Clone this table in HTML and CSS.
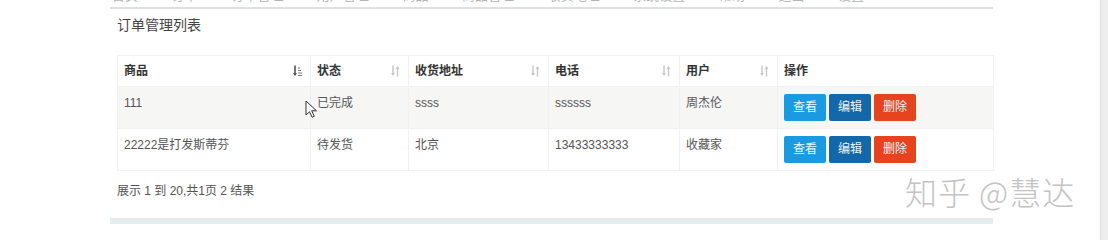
FILE: index.html
```html
<!DOCTYPE html>
<html lang="zh">
<head>
<meta charset="utf-8">
<title>订单管理列表</title>
<link rel="stylesheet" href="styles.css">
</head>
<body>
<div class="page">
  <div class="main">
    <div class="topbar">
      <div class="crumbs">首页 订单 订单管理 用户管理 商品 商品管理 收货地址 系统设置 帮助 退出 设置</div>
    </div>
    <div class="panel">
      <h2 class="title">订单管理列表</h2>
      <table class="grid">
        <colgroup>
          <col class="c1"><col class="c2"><col class="c3"><col class="c4"><col class="c5"><col class="c6">
        </colgroup>
        <thead>
          <tr>
            <th><div class="th"><span>商品</span>
              <svg class="sort" width="9" height="12" viewBox="0 0 9 12"><path d="M2 0.5v9.5" stroke="#555" stroke-width="1.6" fill="none"/><path d="M0 8l2 3 2-3z" fill="#555"/><path d="M5 3h2M5 5.5h3M5 8h4M5 10.5h4" stroke="#777" stroke-width="1.2"/></svg></div></th>
            <th><div class="th"><span>状态</span>
              <svg class="sort" width="9" height="12" viewBox="0 0 9 12"><path d="M2 0.5v9" stroke="#c8c8c8" stroke-width="1.4" fill="none"/><path d="M0 8l2 3 2-3z" fill="#c8c8c8"/><path d="M6.5 11.5v-9" stroke="#c8c8c8" stroke-width="1.4" fill="none"/><path d="M4.5 4l2-3 2 3z" fill="#c8c8c8"/></svg></div></th>
            <th><div class="th"><span>收货地址</span>
              <svg class="sort" width="9" height="12" viewBox="0 0 9 12"><path d="M2 0.5v9" stroke="#c8c8c8" stroke-width="1.4" fill="none"/><path d="M0 8l2 3 2-3z" fill="#c8c8c8"/><path d="M6.5 11.5v-9" stroke="#c8c8c8" stroke-width="1.4" fill="none"/><path d="M4.5 4l2-3 2 3z" fill="#c8c8c8"/></svg></div></th>
            <th><div class="th"><span>电话</span>
              <svg class="sort" width="9" height="12" viewBox="0 0 9 12"><path d="M2 0.5v9" stroke="#c8c8c8" stroke-width="1.4" fill="none"/><path d="M0 8l2 3 2-3z" fill="#c8c8c8"/><path d="M6.5 11.5v-9" stroke="#c8c8c8" stroke-width="1.4" fill="none"/><path d="M4.5 4l2-3 2 3z" fill="#c8c8c8"/></svg></div></th>
            <th><div class="th"><span>用户</span>
              <svg class="sort" width="9" height="12" viewBox="0 0 9 12"><path d="M2 0.5v9" stroke="#c8c8c8" stroke-width="1.4" fill="none"/><path d="M0 8l2 3 2-3z" fill="#c8c8c8"/><path d="M6.5 11.5v-9" stroke="#c8c8c8" stroke-width="1.4" fill="none"/><path d="M4.5 4l2-3 2 3z" fill="#c8c8c8"/></svg></div></th>
            <th><div class="th"><span>操作</span></div></th>
          </tr>
        </thead>
        <tbody>
          <tr class="odd">
            <td>111</td>
            <td>已完成</td>
            <td>ssss</td>
            <td>ssssss</td>
            <td>周杰伦</td>
            <td class="ops"><span class="btn view">查看</span><span class="btn edit">编辑</span><span class="btn del">删除</span></td>
          </tr>
          <tr>
            <td>22222是打发斯蒂芬</td>
            <td>待发货</td>
            <td>北京</td>
            <td>13433333333</td>
            <td>收藏家</td>
            <td class="ops"><span class="btn view">查看</span><span class="btn edit">编辑</span><span class="btn del">删除</span></td>
          </tr>
        </tbody>
      </table>
      <div class="info">展示 1 到 20,共1页 2 结果</div>
    </div>
    <div class="band"></div>
  </div>
  <div class="spacer"></div>
  <div class="scrollbar"></div>
</div>
<svg class="cursor" width="12" height="18" viewBox="0 0 12 18"><path d="M1 1v14l3.5-3.3 2.6 5.6 2.2-1-2.6-5.5h4.8z" fill="#fff" stroke="#333" stroke-width="1"/></svg>
<div class="watermark">知乎 @慧达</div>
</body>
</html>
```
FILE: styles.css
```css
html, body {
  margin: 0;
  padding: 0;
  background: #fff;
}
body {
  width: 1108px;
  height: 240px;
  overflow: hidden;
  position: relative;
  font-family: "Liberation Sans", "Noto Sans CJK SC", sans-serif;
  font-size: 12px;
  color: #555;
}
.page {
  display: flex;
  height: 240px;
}
.main {
  margin-left: 110px;
  width: 883px;
  display: flex;
  flex-direction: column;
}
.topbar {
  height: 7px;
  overflow: hidden;
  border-bottom: 2px solid #dde1e1;
}
.crumbs {
  margin-top: -12px;
  font-size: 13px;
  line-height: 15px;
  color: #b5b5b5;
  word-spacing: 30px;
  white-space: nowrap;
  padding-left: 2px;
}
.panel {
  padding: 6px 0 0 7px;
}
.title {
  margin: 0;
  font-size: 14px;
  font-weight: normal;
  line-height: 20px;
  color: #444;
}
.grid {
  margin-top: 20px;
  width: 876px;
  table-layout: fixed;
  border-collapse: collapse;
}
.c1 { width: 193px; }
.c2 { width: 98px; }
.c3 { width: 140px; }
.c4 { width: 131px; }
.c5 { width: 98px; }
.c6 { width: 216px; }
.grid th, .grid td {
  border: 1px solid #f1f1f1;
  text-align: left;
  vertical-align: top;
  line-height: 18px;
}
.grid th {
  padding: 6px 8px 6px 6px;
  font-weight: bold;
  color: #333;
}
.grid td {
  padding: 7px 6px;
  color: #555;
}
.th {
  display: flex;
  justify-content: space-between;
  align-items: center;
}
.sort {
  display: block;
}
.odd td {
  background: #f6f6f5;
}
.btn {
  display: inline-block;
  height: 27px;
  line-height: 27px;
  padding: 0 9px;
  margin-right: 3px;
  border-radius: 2px;
  color: #eaf4fb;
  font-size: 12px;
}
.view { background: #1a9be1; }
.edit { background: #1268a8; }
.del { background: #e8431f; margin-right: 0; }
.info {
  margin-top: 11px;
  line-height: 18px;
  color: #555;
}
.band {
  margin-top: 18px;
  height: 6px;
  background: #e5ecee;
}
.spacer {
  flex: 1;
}
.scrollbar {
  width: 7px;
  border-left: 1px solid #dedede;
  background: #eeeeee;
}
.cursor {
  position: absolute;
  left: 305px;
  top: 100px;
}
.watermark {
  position: absolute;
  left: 905px;
  top: 171px;
  font-family: "Noto Sans CJK SC", sans-serif;
  font-weight: 300;
  font-size: 32px;
  line-height: 40px;
  color: #c4c4c4;
  letter-spacing: 1px;
  text-shadow: 0 0 2px #fff;
  white-space: nowrap;
}
```
